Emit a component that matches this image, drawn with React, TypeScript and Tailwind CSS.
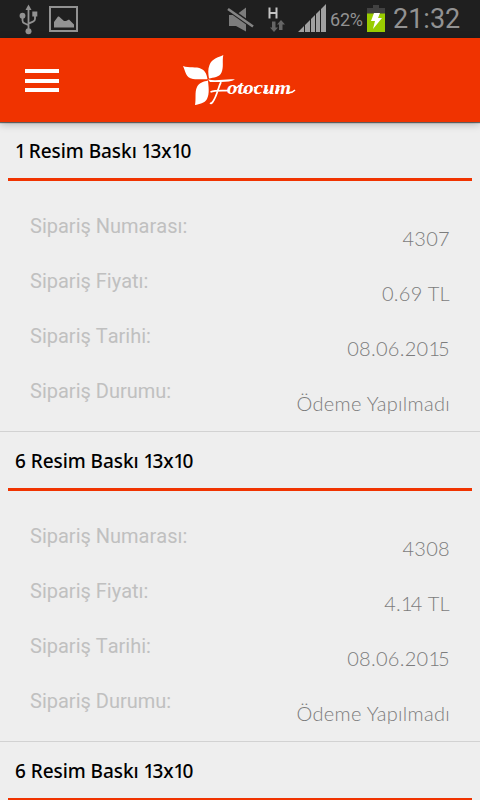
type Order = { title: string; id: string; price: string; date: string; status: string };

const orders: Order[] = [
  { title: "1 Resim Baskı 13x10", id: "4307", price: "0.69 TL", date: "08.06.2015", status: "Ödeme Yapılmadı" },
  { title: "6 Resim Baskı 13x10", id: "4308", price: "4.14 TL", date: "08.06.2015", status: "Ödeme Yapılmadı" },
];

const nextTitle = "6 Resim Baskı 13x10";

function StatusBar() {
  return (
    <div className="flex h-[38px] shrink-0 items-start bg-[#1f1f1f] font-['Roboto',sans-serif] text-[#929292]">
      <svg className="ml-[18px] mt-1 h-[31px] w-5 shrink-0" viewBox="0 0 20 31" fill="#929292" stroke="#929292">
        <path d="M10.500 4v23M4.500 13v3.500q0 2 2 2.800l4 2M17 10v5q0 1.800-2 2.600l-4.500 2" fill="none" strokeWidth="1.800" />
        <path d="M10.500 0.500l3 5.500h-6z" stroke="none" />
        <circle cx="4.500" cy="11.700" r="2.900" stroke="none" />
        <rect x="14.300" y="7.500" width="5" height="5" stroke="none" />
        <circle cx="10.500" cy="27.300" r="3" stroke="none" />
      </svg>
      <svg className="ml-[11px] mt-[6px] h-[26px] w-[29px] shrink-0" viewBox="0 0 29 26" fill="#929292">
        <rect x="1" y="1" width="27" height="24" fill="none" stroke="#929292" strokeWidth="2" />
        <path d="M5 21.500v-5.500l4-5.500h1l5 4.500h2l3-1.500 5 5v3z" />
      </svg>
      <svg className="ml-[149px] mt-[7px] h-[26px] w-[28px] shrink-0" viewBox="0 0 28 26" fill="#7c7c7c">
        <path d="M2 8h7l10-7.500v24L9 19H2z" />
        <path d="M0 1l27 19" stroke="#1f1f1f" strokeWidth="5" />
        <path d="M1 2l25 17.500" stroke="#858585" strokeWidth="2.600" />
      </svg>
      <svg className="ml-3 mt-[3px] h-[30px] w-[19px] shrink-0" viewBox="0 0 19 30">
        <path d="M2.500 4.500v11M9.500 4.500v11M2.500 10h7" fill="none" stroke="#c4c4c4" strokeWidth="2" />
        <path d="M5 18.500h3.500v6H11L7 29l-4-4.500h2zM12 27h3.500v-5.500H18L14 17l-4 4.500h2z" fill="#666" />
      </svg>
      <svg className="ml-[12px] mt-1 h-7 w-[29px] shrink-0" viewBox="0 0 29 28" fill="#a0a0a0">
        <path d="M0 28l6-6v6zM7 28v-7l5-5v12zM13 28V15l4-4v17zM18 28V10l4-4v22zM23 28V5l5-5v28z" />
      </svg>
      <span className="ml-[3px] mt-[7px] w-[35px] whitespace-nowrap text-[18px] leading-[26px] tracking-[-0.2px]">62%</span>
      <svg className="ml-[2px] mt-[5px] h-[27px] w-[18px] shrink-0" viewBox="0 0 18 27">
        <path d="M0 3h6V0h6v3h6v6H0z" fill="#424242" />
        <path d="M0 8.500h18V27H0z" fill="#99cc00" />
        <path d="M7 8h6l-2 5h4L6 24l2-8H4z" fill="#fff" />
      </svg>
      <span className="ml-[8px] mt-[3px] whitespace-nowrap text-[27px] leading-[32px]">21:32</span>
    </div>
  );
}

function Logo() {
  return (
    <svg className="h-[54px] w-[118px]" viewBox="0 0 118 54" fill="#fff" role="img" aria-label="Fotocum">
      <path d="M2 12C8 14.500 15 12 20.500 15c4 2 5.500 6 6 10.300-5-.5-10 .4-14.500-.3C4.500 24 4.500 17 2 12z" />
      <path d="M28 24.500c-.8-5-1.300-9 .5-13.500C31 4.500 37 3.500 42.300 1 41 7 43 13 40.500 18.500c-2.300 5-8 5-12.500 6z" />
      <path d="M27 26.500c.5 6 1.800 13-1 18.500-2.500 4.500-7.500 5-12 6 1.300-6-.5-13 2-18 2-4.500 7-5.500 11-6.500z" />
      <path d="M27 25.500c9 2 18-1 27 0-6 3.500-15 2-25 2.500z" />
      <path d="M40 28c-3 6-4 14-8 19.500q-1.500 2.500-3 1.500M29.500 38c5-2 12-1 18-1.500" fill="none" stroke="#fff" strokeWidth="1.700" />
      <text
        x="46"
        y="39.500"
        textLength="64"
        lengthAdjust="spacingAndGlyphs"
        className="font-['Liberation_Serif',serif] text-[19px] font-bold italic"
      >
        otocum
      </text>
      <path
        d="M53 33q2 2 5-1M62 38q2 1 4-2M73 33q2 2 4-1M82 38.500q3 0 5-3M94 38q3 0 4-3M108 38.500q3 .5 6-2.500"
        fill="none"
        stroke="#fff"
        strokeWidth="1.500"
      />
    </svg>
  );
}

function Header() {
  return (
    <header className="z-10 flex h-[84px] shrink-0 items-start bg-[#f03300] shadow-[0_1px_1px_#0008,0_2px_8px_#0004]">
      <button className="ml-[25px] mt-[31px] flex w-[34px] flex-col gap-[5.5px]" aria-label="Menu">
        <span className="h-[4px] w-full bg-white" />
        <span className="h-[4px] w-full bg-white" />
        <span className="h-[4px] w-full bg-white" />
      </button>
      <div className="ml-[122px] mt-[16px]">
        <Logo />
      </div>
    </header>
  );
}

/* Sets the digit 1 tighter than the font's tabular figures. */
function TightOnes({ text }: { text: string }) {
  return (
    <>
      {text.split(/(1)/).map((part, i) =>
        part === "1" ? (
          <span key={i} className="tracking-[-2px]">
            1
          </span>
        ) : (
          part
        ),
      )}
    </>
  );
}

function Row({ label, value }: { label: string; value: string }) {
  return (
    <div className="flex h-[55px] justify-between px-[30px]">
      <span className="mt-[3px] h-6 font-['Roboto',sans-serif] text-[20px] leading-6 text-[#c0c0c0] [font-kerning:none]">
        {label}
      </span>
      <span className="mt-[15px] h-6 whitespace-pre font-['Lato',sans-serif] text-[20px] font-light leading-6 tracking-[0.3px] text-[#7c7c7c]">
        <TightOnes text={value} />
      </span>
    </div>
  );
}

function OrderHeading({ title }: { title: string }) {
  return (
    <>
      <h2 className="h-14 whitespace-pre pl-[15px] pt-[15px] font-['Noto_Sans',sans-serif] text-[19px] font-medium leading-7 tracking-[-0.05px] text-black">
        <TightOnes text={title} />
      </h2>
      <div className="mx-2 h-[3px] shrink-0 bg-[#f03300]" />
    </>
  );
}

function OrderItem({ order }: { order: Order }) {
  return (
    <section className="h-[310px] shrink-0 border-b border-[#d2d2d2]">
      <OrderHeading title={order.title} />
      <div className="pt-[30px]">
        <Row label="Sipariş Numarası:" value={order.id} />
        <Row label="Sipariş Fiyatı:" value={order.price} />
        <Row label="Sipariş Tarihi:" value={order.date} />
        <Row label="Sipariş Durumu:" value={order.status} />
      </div>
    </section>
  );
}

export default function App() {
  return (
    <div className="flex h-[800px] w-[480px] flex-col overflow-hidden bg-[#eeeeee]">
      <StatusBar />
      <Header />
      <main className="flex min-h-0 flex-1 flex-col overflow-hidden">
        {orders.map((order) => (
          <OrderItem key={order.id} order={order} />
        ))}
        <section className="shrink-0">
          <OrderHeading title={nextTitle} />
        </section>
      </main>
    </div>
  );
}
